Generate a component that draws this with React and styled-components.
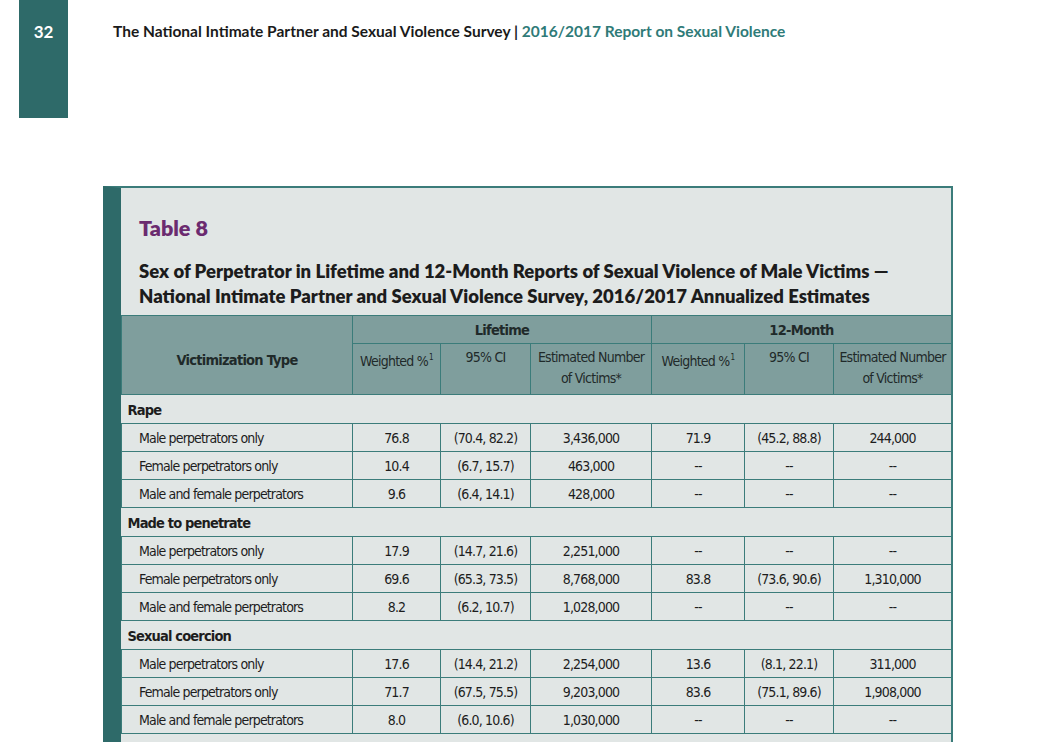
import React from 'react';
import styled, { createGlobalStyle } from 'styled-components';

const GlobalStyle = createGlobalStyle`
  html, body {
    margin: 0;
    padding: 0;
    background: #ffffff;
    overflow: hidden;
  }
  body {
    font-family: Lato, "Open Sans", sans-serif;
  }
`;

const Page = styled.div`
  width: 1052px;
  height: 742px;
  overflow: hidden;
  background: #fff;
`;

const Header = styled.div`
  display: flex;
  align-items: flex-start;
`;

const PageTab = styled.div`
  width: 49px;
  height: 118px;
  margin-left: 19px;
  background: #2e6a69;
  color: #fff;
  font-family: Lato, sans-serif;
  font-weight: 700;
  font-size: 17px;
  text-align: center;
  padding-top: 21px;
  box-sizing: border-box;
`;

const RunningTitle = styled.div`
  margin-left: 45px;
  padding-top: 22px;
  font-family: Lato, sans-serif;
  font-weight: 700;
  font-size: 15.5px;
  color: #1a1a1a;
  white-space: nowrap;
`;

const Accent = styled.span`
  color: #2f7b78;
`;

const Panel = styled.div`
  margin: 68px 0 0 103px;
  width: 850px;
  box-sizing: border-box;
  background: #e1e6e5;
  border-left: 18px solid #2e6a69;
  border-top: 2px solid #3b7c7a;
  border-right: 2px solid #3b7c7a;
  height: 600px;
`;

const TitleBlock = styled.div`
  padding: 26px 18px 6px 18px;
`;

const TableNo = styled.div`
  font-family: Lato, sans-serif;
  font-weight: 800;
  font-size: 21.5px;
  color: #6b2b6f;
  line-height: 28px;
`;

const Caption = styled.div`
  margin-top: 17px;
  font-family: Lato, sans-serif;
  font-weight: 800;
  font-size: 18.5px;
  line-height: 25px;
  color: #1c1c1c;
  white-space: nowrap;
`;

const Grid = styled.table`
  width: 830px;
  border-collapse: collapse;
  table-layout: fixed;
  font-family: "DejaVu Sans Condensed", "Liberation Sans Narrow", "Liberation Sans", sans-serif;
  font-stretch: condensed;
  color: #1d1d1d;
`;

const HeadCell = styled.th`
  background: #7f9e9d;
  border: 1px solid #3b7c7a;
  font-weight: ${p => (p.bold ? 700 : 400)};
  font-size: ${p => (p.bold ? 14.5 : 14)}px;
  letter-spacing: -0.75px;
  line-height: 21px;
  height: ${p => p.h}px;
  padding: ${p => p.pad || '0'};
  box-sizing: border-box;
  vertical-align: ${p => p.valign || 'middle'};
  text-align: center;
  white-space: nowrap;
  color: #1f2a2a;
`;

const GroupCell = styled.td`
  border-top: 1px solid #3b7c7a;
  border-bottom: 1px solid #3b7c7a;
  font-weight: 700;
  font-size: 14.5px;
  letter-spacing: -0.85px;
  height: 27px;
  padding: 1px 0 0 6px;
  text-align: left;
`;

const Cell = styled.td`
  border: 1px solid #3b7c7a;
  font-size: 14px;
  letter-spacing: -0.85px;
  height: 26px;
  padding: ${p => (p.label ? '1px 0 0 17px' : '1px 0 0')};
  text-align: ${p => (p.label ? 'left' : 'center')};
  white-space: nowrap;
`;

const Sup = styled.sup`
  font-size: 8px;
  vertical-align: 6px;
  margin-left: 1px;
`;

const Note = styled.span`
  display: block;
`;

const groups = [
  {
    name: 'Rape',
    rows: [
      ['Male perpetrators only', '76.8', '(70.4, 82.2)', '3,436,000', '71.9', '(45.2, 88.8)', '244,000'],
      ['Female perpetrators only', '10.4', '(6.7, 15.7)', '463,000', '--', '--', '--'],
      ['Male and female perpetrators', '9.6', '(6.4, 14.1)', '428,000', '--', '--', '--'],
    ],
  },
  {
    name: 'Made to penetrate',
    rows: [
      ['Male perpetrators only', '17.9', '(14.7, 21.6)', '2,251,000', '--', '--', '--'],
      ['Female perpetrators only', '69.6', '(65.3, 73.5)', '8,768,000', '83.8', '(73.6, 90.6)', '1,310,000'],
      ['Male and female perpetrators', '8.2', '(6.2, 10.7)', '1,028,000', '--', '--', '--'],
    ],
  },
  {
    name: 'Sexual coercion',
    rows: [
      ['Male perpetrators only', '17.6', '(14.4, 21.2)', '2,254,000', '13.6', '(8.1, 22.1)', '311,000'],
      ['Female perpetrators only', '71.7', '(67.5, 75.5)', '9,203,000', '83.6', '(75.1, 89.6)', '1,908,000'],
      ['Male and female perpetrators', '8.0', '(6.0, 10.6)', '1,030,000', '--', '--', '--'],
    ],
  },
  {
    name: 'Unwanted sexual contact',
    rows: [],
  },
];

const widths = [231, 88, 90, 121, 93, 89, 118];

export default function App() {
  return (
    <Page>
      <GlobalStyle />
      <Header>
        <PageTab>32</PageTab>
        <RunningTitle>
          The National Intimate Partner and Sexual Violence Survey | <Accent>2016/2017 Report on Sexual Violence</Accent>
        </RunningTitle>
      </Header>

      <Panel>
        <TitleBlock>
          <TableNo>Table 8</TableNo>
          <Caption>
            Sex of Perpetrator in Lifetime and 12-Month Reports of Sexual Violence of Male Victims —
            <br />
            National Intimate Partner and Sexual Violence Survey, 2016/2017 Annualized Estimates
          </Caption>
        </TitleBlock>

        <Grid>
          <colgroup>
            {widths.map((w, i) => (
              <col key={i} style={{ width: w }} />
            ))}
          </colgroup>
          <thead>
            <tr>
              <HeadCell bold rowSpan={2} h={28} pad="10px 0 0">Victimization Type</HeadCell>
              <HeadCell bold colSpan={3} h={28} pad="1px 0 0">Lifetime</HeadCell>
              <HeadCell bold colSpan={3} h={28} pad="1px 0 0">12-Month</HeadCell>
            </tr>
            <tr>
              {['Lifetime', '12-Month'].map(period => (
                <React.Fragment key={period}>
                  <HeadCell h={51} valign="top" pad="3px 0 0">Weighted %<Sup>1</Sup></HeadCell>
                  <HeadCell h={51} valign="top" pad="3px 0 0">95% CI</HeadCell>
                  <HeadCell h={51} valign="top" pad="3px 0 0">
                    <Note>Estimated Number</Note>
                    <Note>of Victims*</Note>
                  </HeadCell>
                </React.Fragment>
              ))}
            </tr>
          </thead>
          <tbody>
            {groups.map(g => (
              <React.Fragment key={g.name}>
                <tr>
                  <GroupCell colSpan={7}>{g.name}</GroupCell>
                </tr>
                {g.rows.map(r => (
                  <tr key={g.name + r[0]}>
                    {r.map((v, i) => (
                      <Cell key={i} label={i === 0}>{v}</Cell>
                    ))}
                  </tr>
                ))}
              </React.Fragment>
            ))}
          </tbody>
        </Grid>
      </Panel>
    </Page>
  );
}
